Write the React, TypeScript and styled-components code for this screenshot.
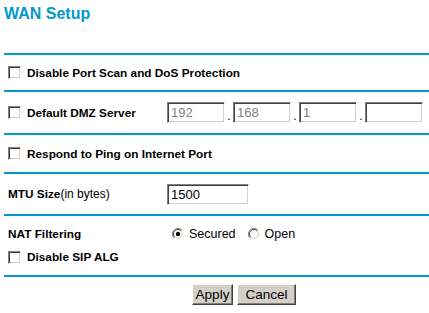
import React from 'react';
import styled, {createGlobalStyle} from 'styled-components';

const GlobalStyle = createGlobalStyle`
  html, body {
    margin: 0;
    padding: 0;
    background: #ffffff;
    font-family: "Liberation Sans", Arial, sans-serif;
    color: #000000;
  }
`

const Page = styled.div`
  width: 429px;
  padding: 0 0 0 4px;
  box-sizing: border-box;
  overflow: hidden;
`

const Title = styled.h1`
  margin: 0;
  padding-top: 4px;
  height: 53px;
  box-sizing: border-box;
  font-size: 16px;
  line-height: 19px;
  font-weight: bold;
  color: #0099cc;
`

const Rule = styled.div`
  height: 2px;
  margin-right: -4px;
  background: #0099cc;
`

const Section = styled.div<{$h: number}>`
  height: ${p => p.$h}px;
  display: flex;
  flex-direction: column;
  justify-content: center;
  gap: 9px;
`

const Row = styled.div`
  display: grid;
  grid-template-columns: 163px 1fr;
  align-items: center;
  min-height: 14px;
`

const Label = styled.div`
  display: flex;
  align-items: center;
  gap: 6px;
  padding-left: 4px;
  font-size: 11.8px;
  font-weight: bold;
  white-space: nowrap;
`

const Note = styled.span`
  font-weight: normal;
  font-size: 12px;
  margin-left: -6px;
`

const Check = styled.span`
  width: 13px;
  height: 13px;
  box-sizing: border-box;
  background: #ffffff;
  border-style: solid;
  border-width: 1px;
  border-color: #808080 #ffffff #ffffff #808080;
  box-shadow: inset 1px 1px 0 #404040, inset -1px -1px 0 #d4d0c8;
  flex: none;
`

const Field = styled.div`
  display: flex;
  align-items: center;
`

const TextBox = styled.div<{$w: number; $dim?: boolean}>`
  width: ${p => p.$w}px;
  height: 21px;
  box-sizing: border-box;
  border-style: solid;
  border-width: 1px;
  border-color: #808080 #ffffff #ffffff #808080;
  box-shadow: inset 1px 1px 0 #404040, inset -1px -1px 0 #d4d0c8;
  padding: 2px 0 0 3px;
  font-size: 13px;
  line-height: 16px;
  color: ${p => (p.$dim ? '#808080' : '#000000')};
`

const Dot = styled.span`
  width: 8px;
  text-align: center;
  font-size: 12px;
  line-height: 12px;
  align-self: flex-end;
  padding-bottom: 1px;
`

const Radios = styled.div`
  display: flex;
  align-items: center;
  padding-left: 5px;
  font-size: 12.5px;
`

const RadioItem = styled.label`
  display: flex;
  align-items: center;
  gap: 5px;
  margin-right: 12px;
`

const Buttons = styled.div`
  display: flex;
  gap: 4px;
  padding: 7px 0 0 188px;
`

const Button = styled.button<{$w: number}>`
  width: ${p => p.$w}px;
  height: 21px;
  padding: 0;
  background: #d4d0c8;
  font-family: "Liberation Sans", Arial, sans-serif;
  font-size: 13.5px;
  color: #000000;
  border-style: solid;
  border-width: 1px;
  border-color: #ffffff #404040 #404040 #ffffff;
  box-shadow: inset -1px -1px 0 #808080, inset 1px 1px 0 #d4d0c8;
  border-radius: 0;
`

const Radio: React.FC<{on?: boolean}> = ({on}) => (
  <svg width="12" height="12" viewBox="0 0 12 12">
    <path d="M2 10 A5.5 5.5 0 0 1 10 2" fill="none" stroke="#808080" strokeWidth="1" />
    <path d="M10 2 A5.5 5.5 0 0 1 2 10" fill="none" stroke="#ffffff" strokeWidth="1" />
    <circle cx="6" cy="6" r="4.5" fill="#ffffff" />
    <path d="M2.8 9.2 A4.5 4.5 0 0 1 9.2 2.8" fill="none" stroke="#404040" strokeWidth="1" />
    <path d="M9.2 2.8 A4.5 4.5 0 0 1 2.8 9.2" fill="none" stroke="#d4d0c8" strokeWidth="1" />
    {on && <circle cx="6" cy="6" r="2.2" fill="#000000" />}
  </svg>
)

const App: React.FC = () => {
  const ip = ['192', '168', '1', ''];
  return (
    <Page>
      <GlobalStyle />
      <Title>WAN Setup</Title>
      <Rule />
      <Section $h={35}>
        <Row>
          <Label><Check />Disable Port Scan and DoS Protection</Label>
        </Row>
      </Section>
      <Rule />
      <Section $h={41}>
        <Row>
          <Label><Check />Default DMZ Server</Label>
          <Field>
            {ip.map((v, i) => (
              <React.Fragment key={i}>
                {i > 0 && <Dot>.</Dot>}
                <TextBox $w={58} $dim={i < 3}>{v}</TextBox>
              </React.Fragment>
            ))}
          </Field>
        </Row>
      </Section>
      <Rule />
      <Section $h={37}>
        <Row>
          <Label><Check />Respond to Ping on Internet Port</Label>
        </Row>
      </Section>
      <Rule />
      <Section $h={40}>
        <Row>
          <Label>MTU Size<Note>(in bytes)</Note></Label>
          <Field>
            <TextBox $w={82}>1500</TextBox>
          </Field>
        </Row>
      </Section>
      <Rule />
      <Section $h={59}>
        <Row>
          <Label>NAT Filtering</Label>
          <Radios>
            <RadioItem><Radio on />Secured</RadioItem>
            <RadioItem><Radio />Open</RadioItem>
          </Radios>
        </Row>
        <Row>
          <Label><Check />Disable SIP ALG</Label>
        </Row>
      </Section>
      <Rule />
      <Buttons>
        <Button $w={41}>Apply</Button>
        <Button $w={59}>Cancel</Button>
      </Buttons>
    </Page>
  );
}

export default App;
